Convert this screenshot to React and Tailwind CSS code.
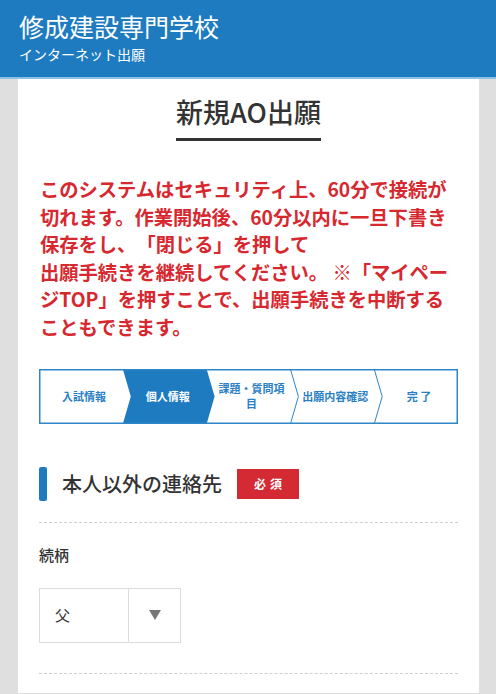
import React from "react";

const JP = { fontFamily: '"Noto Sans CJK JP", "Noto Sans", sans-serif' };

function Steps() {
  const w = 419;
  const h = 55;
  const c = w / 5;
  const labels = [
    { t: "入試情報", active: false },
    { t: "個人情報", active: true },
    { t: (<>課題・質問項<br />目</>), active: false },
    { t: "出願内容確認", active: false },
    { t: "完 了", active: false },
  ];
  return (
    <div className="relative w-[419px] h-[55px]">
      <svg className="absolute inset-0" width={w} height={h} viewBox={`0 0 ${w} ${h}`}>
        <polygon
          points={`${c},0 ${c + 8},${h / 2} ${c},${h} ${2 * c},${h} ${2 * c + 8},${h / 2} ${2 * c},0`}
          fill="#1f7bc0"
        />
        <polyline points={`${3 * c},0 ${3 * c + 8},${h / 2} ${3 * c},${h}`} fill="none" stroke="#2e86c8" strokeWidth="1" />
        <polyline points={`${4 * c},0 ${4 * c + 8},${h / 2} ${4 * c},${h}`} fill="none" stroke="#2e86c8" strokeWidth="1" />
        <rect x="0.75" y="0.75" width={w - 1.5} height={h - 1.5} fill="none" stroke="#2e86c8" strokeWidth="1.5" />
      </svg>
      <div className="relative grid grid-cols-5 h-full">
        {labels.map((l, i) => (
          <div
            key={i}
            className={`flex items-center justify-center text-center text-[11px] leading-[15px] font-bold pl-[6px] ${l.active ? "text-white" : "text-[#2a80c4]"}`}
          >
            <span>{l.t}</span>
          </div>
        ))}
      </div>
    </div>
  );
}

export default function App() {
  return (
    <div style={JP} className="min-h-[694px] bg-[#dfdfdf] [text-spacing-trim:space-all]">
      <header className="bg-[#1e7bc0] border-b-2 border-[#8cc0e6] px-[19px] pt-[11px] pb-[14px] text-white">
        <div className="text-[25px] leading-[30px]">修成建設専門学校</div>
        <div className="mt-[4px] text-[14px] leading-[18px]">インターネット出願</div>
      </header>
      <main className="mx-[18px] w-[461px] bg-white px-[21px] pb-[19px]">
        <div className="flex justify-center pt-[17px]">
          <h1 className="text-[27px] leading-[32px] font-medium text-[#333] border-b-[3px] border-[#333] pb-[10px]">
            新規AO出願
          </h1>
        </div>
        <p className="mt-[35px] pl-[1px] text-[19.3px] leading-[27.6px] font-bold text-[#d7282f] whitespace-nowrap">
          このシステムはセキュリティ上、60分で接続が<br />
          切れます。作業開始後、60分以内に一旦下書き<br />
          保存をし、「閉じる」を押して<br />
          出願手続きを継続してください。 ※「マイペー<br />
          ジTOP」を押すことで、出願手続きを中断する<br />
          こともできます。
        </p>
        <div className="mt-[27px]">
          <Steps />
        </div>
        <div className="mt-[43px] flex items-center">
          <div className="w-[8px] h-[34px] bg-[#1f7bc0] rounded-[2px]"></div>
          <h2 className="ml-[15px] text-[20px] leading-[28px] font-medium text-[#333]">本人以外の連絡先</h2>
          <span className="ml-[15px] w-[62px] h-[30px] flex items-center justify-center bg-[#d42a33] text-white text-[12px] font-bold tracking-[4px] pl-[4px]">
            必須
          </span>
        </div>
        <div className="mt-[21px] border-t border-dashed border-[#cfcfcf]"></div>
        <div className="mt-[21px] text-[15px] leading-[22px] font-medium text-[#333]">続柄</div>
        <div className="mt-[22px] flex w-[142px] h-[55px] border border-[#dcdcdc]">
          <div className="w-[89px] flex items-center pl-[15px] text-[15px] text-[#333] border-r border-[#dcdcdc]">父</div>
          <div className="flex-1 flex items-center justify-center">
            <svg width="12" height="10" viewBox="0 0 12 10">
              <polygon points="0,0 12,0 6,10" fill="#777" />
            </svg>
          </div>
        </div>
        <div className="mt-[30px] border-t border-dashed border-[#cfcfcf]"></div>
      </main>
    </div>
  );
}
